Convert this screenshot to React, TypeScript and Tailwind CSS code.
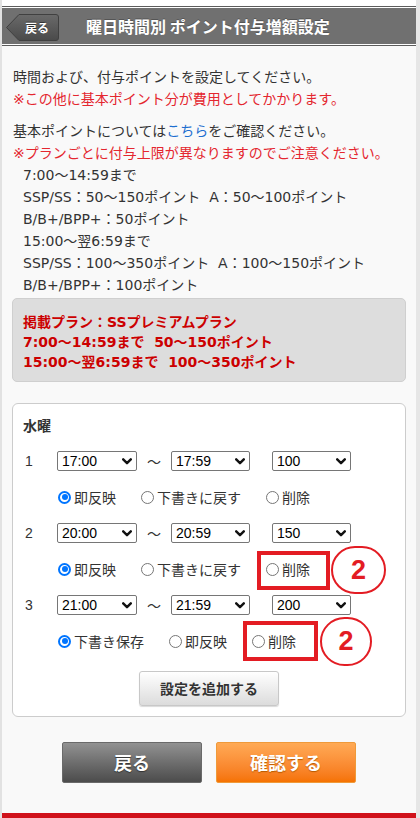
import React from "react";

const SANS = "font-['Noto_Sans_CJK_JP','Noto_Sans',sans-serif]";
const MIX = "font-['DejaVu_Sans','Noto_Sans_CJK_JP',sans-serif]";

function Radio({ checked, label, last }: { checked?: boolean; label: string; last?: boolean }) {
  return (
    <div className={`flex items-center ${last ? "" : "mr-[25px]"}`}>
      {checked ? (
        <span className="flex h-[13px] w-[13px] items-center justify-center rounded-full border-[2px] border-[#0075ff] bg-white">
          <span className="h-[6px] w-[6px] rounded-full bg-[#0075ff]" />
        </span>
      ) : (
        <span className="h-[13px] w-[13px] rounded-full border border-[#767676] bg-white" />
      )}
      <span className="ml-[3px] text-[14px] leading-[20px] text-[#333]">{label}</span>
    </div>
  );
}

function Select({ value, w = "w-[80px]" }: { value: string; w?: string }) {
  return (
    <div
      className={`flex h-[20px] ${w} items-center justify-between rounded-[2px] border border-[#767676] bg-white pl-[4px] pr-[4px] font-['Liberation_Sans',Arial,sans-serif] text-[14px] leading-[18px] text-black`}
    >
      <span>{value}</span>
      <svg width="10" height="7" viewBox="0 0 10 7">
        <path d="M1.2 1.3 L5 5.2 L8.8 1.3" fill="none" stroke="#111" strokeWidth="2.4" strokeLinecap="round" strokeLinejoin="round" />
      </svg>
    </div>
  );
}

function Entry({
  n,
  from,
  to,
  pts,
  radios,
}: {
  n: string;
  from: string;
  to: string;
  pts: string;
  radios: { label: string; checked?: boolean }[];
}) {
  return (
    <div className="mt-[16px]">
      <div className="flex h-[20px] items-center">
        <span className="w-[34px] pl-[2px] font-['Liberation_Sans',Arial,sans-serif] text-[14px] text-[#333]">{n}</span>
        <Select value={from} />
        <span className="flex w-[34px] justify-center text-[14px] text-[#333]">〜</span>
        <Select value={to} w="w-[79px]" />
        <span className="w-[22px]" />
        <Select value={pts} w="w-[79px]" />
      </div>
      <div className="mt-[16px] flex h-[20px] items-center pl-[35px]">
        {radios.map((r, i) => (
          <Radio key={i} label={r.label} checked={r.checked} last={i === radios.length - 1} />
        ))}
      </div>
    </div>
  );
}

export default function App() {
  return (
    <div className={`relative flex h-[818px] w-[420px] overflow-hidden bg-[#f9f9f9] ${SANS}`}>
      <div className="flex w-[416px] flex-col border-l-2 border-[#e2e2e2]">
        <div className="h-[6px] bg-white" />
        <div className="h-px bg-[#5c5c5c]" />
        <div className="h-px bg-white" />
        <header className="flex h-[36px] bg-[#707070]">
          <div className="relative ml-[4px] mt-[6px] flex h-[27px] w-[53px] items-center">
            <svg className="absolute left-0 top-0" width="53" height="27" viewBox="0 0 53 27">
              <defs>
                <linearGradient id="bk" x1="0" y1="0" x2="0" y2="1">
                  <stop offset="0" stopColor="#6a6a6a" />
                  <stop offset="1" stopColor="#4a4a4a" />
                </linearGradient>
              </defs>
              <path d="M0.5 13.5 L13 0.5 L50 0.5 Q52.5 0.5 52.5 3 L52.5 24 Q52.5 26.5 50 26.5 L13 26.5 Z" fill="url(#bk)" stroke="#404040" />
            </svg>
            <span className="relative ml-[19px] text-[12px] font-bold leading-none text-white [text-shadow:0_-1px_0_#333]">
              戻る
            </span>
          </div>
          <h1 className="ml-[27px] self-center text-[16px] font-bold leading-none text-white [text-shadow:0_-1px_0_#555]">
            曜日時間別 ポイント付与増額設定
          </h1>
        </header>
        <div className="h-px bg-white" />
        <div className="h-px bg-[#5c5c5c]" />

        <main className="flex-1 px-[10px] pt-[20px]">
          <div className={`pl-[1px] text-[14px] leading-[22px] text-[#333] ${MIX}`}>
            <p>時間および、付与ポイントを設定してください。</p>
            <p className="text-[#e4262f]">※この他に基本ポイント分が費用としてかかります。</p>
            <p className="mt-[10px]">
              基本ポイントについては<span className="text-[#1e6fd0]">こちら</span>をご確認ください。
            </p>
            <p className="text-[#e4262f]">※プランごとに付与上限が異なりますのでご注意ください。</p>
            <div className="pl-[10px]">
              <p>7:00〜14:59まで</p>
              <p>SSP/SS：50〜150ポイント&nbsp;&nbsp;A：50〜100ポイント</p>
              <p>B/B+/BPP+：50ポイント</p>
              <p>15:00〜翌6:59まで</p>
              <p>SSP/SS：100〜350ポイント&nbsp;&nbsp;A：100〜150ポイント</p>
              <p>B/B+/BPP+：100ポイント</p>
            </div>
          </div>

          <div className={`mt-[2px] h-[84px] rounded-[5px] border border-[#cfcfcf] bg-[#dddddd] pl-[10px] pt-[13px] text-[14px] font-bold leading-[20px] text-[#cc0000] ${MIX}`}>
            <p>掲載プラン：SSプレミアムプラン</p>
            <p>7:00〜14:59まで&nbsp;&nbsp;50〜150ポイント</p>
            <p>15:00〜翌6:59まで&nbsp;&nbsp;100〜350ポイント</p>
          </div>

          <div className="mt-[21px] rounded-[6px] border border-[#cccccc] bg-white px-[10px] pb-[10px] pt-[11px]">
            <p className="h-[20px] text-[14px] font-bold leading-[20px] text-[#333]">水曜</p>
            <Entry
              n="1"
              from="17:00"
              to="17:59"
              pts="100"
              radios={[{ label: "即反映", checked: true }, { label: "下書きに戻す" }, { label: "削除" }]}
            />
            <Entry
              n="2"
              from="20:00"
              to="20:59"
              pts="150"
              radios={[{ label: "即反映", checked: true }, { label: "下書きに戻す" }, { label: "削除" }]}
            />
            <Entry
              n="3"
              from="21:00"
              to="21:59"
              pts="200"
              radios={[{ label: "下書き保存", checked: true }, { label: "即反映" }, { label: "削除" }]}
            />
            <div className="mt-[20px] flex justify-center">
              <button className="flex h-[35px] w-[140px] items-center justify-center rounded-[3px] border border-[#c8c8c8] bg-gradient-to-b from-[#ffffff] to-[#dcdcdc] text-[14px] font-bold text-[#333] shadow-[0_1px_1px_rgba(0,0,0,0.15)]">
                設定を追加する
              </button>
            </div>
          </div>

          <div className="mt-[25px] flex justify-center gap-[14px]">
            <button className="flex h-[41px] w-[140px] items-center justify-center rounded-[2px] border border-[#6a6a6a] bg-gradient-to-b from-[#929292] to-[#4c4c4c] text-[18px] font-bold text-white [text-shadow:0_1px_1px_#333]">
              戻る
            </button>
            <button className="flex h-[41px] w-[140px] items-center justify-center rounded-[2px] border border-[#ef9a3a] bg-gradient-to-b from-[#ffaa55] to-[#f57200] text-[18px] font-bold text-white [text-shadow:0_1px_1px_#b85a00]">
              確認する
            </button>
          </div>
        </main>

        <div className="h-[5px] bg-[#d0121b]" />
      </div>
      <div className="w-[4px] bg-[#e6e6e6]" />

      {/* annotations */}
      <div className="absolute left-[257px] top-[551px] h-[39px] w-[73px] border-[4px] border-[#e31c23]" />
      <div className="absolute left-[331px] top-[546px] flex h-[48px] w-[55px] items-center justify-center rounded-full border-[2px] border-[#e31c23] font-['Liberation_Sans',Arial,sans-serif] text-[27px] font-bold text-[#e31c23]">
        2
      </div>
      <div className="absolute left-[243px] top-[621px] h-[40px] w-[75px] border-[4px] border-[#e31c23]" />
      <div className="absolute left-[320px] top-[617px] flex h-[49px] w-[52px] items-center justify-center rounded-full border-[2px] border-[#e31c23] font-['Liberation_Sans',Arial,sans-serif] text-[27px] font-bold text-[#e31c23]">
        2
      </div>
    </div>
  );
}
